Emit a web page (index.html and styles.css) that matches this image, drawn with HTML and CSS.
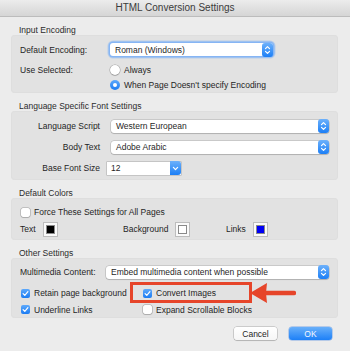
FILE: index.html
```html
<!DOCTYPE html>
<html lang="en">
<head>
  <meta charset="UTF-8" />
  <title>HTML Conversion Settings</title>
  <link rel="stylesheet" href="styles.css">
</head>
<body>
  <div class="titlebar">HTML Conversion Settings</div>

  <div class="content">
    <div class="section">
      <div class="section-title">Input Encoding</div>
      <div class="group group-encoding">
        <div class="row row-first">
          <span class="label">Default Encoding:</span>
          <div class="select select-focus select-encoding">
            <span class="select-text">Roman (Windows)</span>
            <span class="stepper"><svg viewBox="0 0 7 10" width="7" height="10"><path d="M1.5 3.6 L3.5 1.6 L5.5 3.6 M1.5 6.4 L3.5 8.4 L5.5 6.4" /></svg></span>
          </div>
        </div>
        <div class="row row-use">
          <span class="label">Use Selected:</span>
          <span class="radio"></span>
          <span class="option-text">Always</span>
        </div>
        <div class="row row-when">
          <span class="label"></span>
          <span class="radio on"></span>
          <span class="option-text">When Page Doesn't specify Encoding</span>
        </div>
      </div>
    </div>

    <div class="section">
      <div class="section-title">Language Specific Font Settings</div>
      <div class="group group-fonts">
        <div class="row">
          <span class="label">Language Script</span>
          <div class="select">
            <span class="select-text">Western European</span>
            <span class="stepper"><svg viewBox="0 0 7 10" width="7" height="10"><path d="M1.5 3.6 L3.5 1.6 L5.5 3.6 M1.5 6.4 L3.5 8.4 L5.5 6.4" /></svg></span>
          </div>
        </div>
        <div class="row">
          <span class="label">Body Text</span>
          <div class="select">
            <span class="select-text">Adobe Arabic</span>
            <span class="stepper"><svg viewBox="0 0 7 10" width="7" height="10"><path d="M1.5 3.6 L3.5 1.6 L5.5 3.6 M1.5 6.4 L3.5 8.4 L5.5 6.4" /></svg></span>
          </div>
        </div>
        <div class="row">
          <span class="label">Base Font Size</span>
          <div class="combo">
            <span class="combo-text">12</span>
            <span class="combo-btn"><svg viewBox="0 0 7 7" width="7" height="7"><path d="M1.4 2.4 L3.5 4.6 L5.6 2.4" /></svg></span>
          </div>
        </div>
      </div>
    </div>

    <div class="section">
      <div class="section-title">Default Colors</div>
      <div class="group group-colors">
        <div class="row">
          <span class="check"></span>
          <span class="option-text">Force These Settings for All Pages</span>
        </div>
        <div class="row row-swatches">
          <div class="color-item">
            <span>Text</span>
            <span class="swatch"><span class="swatch-fill fill-black"></span></span>
          </div>
          <div class="color-item">
            <span>Background</span>
            <span class="swatch"><span class="swatch-fill fill-white"></span></span>
          </div>
          <div class="color-item">
            <span>Links</span>
            <span class="swatch"><span class="swatch-fill fill-blue"></span></span>
          </div>
        </div>
      </div>
    </div>

    <div class="section">
      <div class="section-title">Other Settings</div>
      <div class="group group-other">
        <div class="row row-first">
          <span class="label">Multimedia Content:</span>
          <div class="select">
            <span class="select-text">Embed multimedia content when possible</span>
            <span class="stepper"><svg viewBox="0 0 7 10" width="7" height="10"><path d="M1.5 3.6 L3.5 1.6 L5.5 3.6 M1.5 6.4 L3.5 8.4 L5.5 6.4" /></svg></span>
          </div>
        </div>
        <div class="check-grid">
          <div class="check-item">
            <span class="check on"><svg viewBox="0 0 9 9" width="9" height="9"><path d="M2.1 4.6 L3.8 6.3 L6.9 2.6" /></svg></span>
            <span class="option-text">Retain page background</span>
          </div>
          <div class="check-item">
            <span class="check on"><svg viewBox="0 0 9 9" width="9" height="9"><path d="M2.1 4.6 L3.8 6.3 L6.9 2.6" /></svg></span>
            <span class="option-text">Convert Images</span>
          </div>
          <div class="check-item">
            <span class="check on"><svg viewBox="0 0 9 9" width="9" height="9"><path d="M2.1 4.6 L3.8 6.3 L6.9 2.6" /></svg></span>
            <span class="option-text">Underline Links</span>
          </div>
          <div class="check-item">
            <span class="check"></span>
            <span class="option-text">Expand Scrollable Blocks</span>
          </div>
        </div>

        <!-- annotation drawn over the dialog -->
        <div class="callout-box"></div>
        <svg class="callout-arrow" viewBox="0 0 46 20" width="46" height="20">
          <polygon points="0,10 17,0 16,10 17,20" />
          <line x1="15" y1="10" x2="44" y2="10" />
        </svg>
      </div>
    </div>

    <div class="actions">
      <button class="btn">Cancel</button>
      <button class="btn btn-primary">OK</button>
    </div>
  </div>
</body>
</html>
```

FILE: styles.css
```css
* {
  box-sizing: border-box;
}

body {
  margin: 0;
  width: 350px;
  height: 351px;
  overflow: hidden;
  background: #ececec;
  font-family: 'Liberation Sans', Arial, sans-serif;
  font-size: 8.5px;
  color: #1f1f1f;
}

.titlebar {
  height: 17px;
  line-height: 16px;
  text-align: center;
  font-size: 10px;
  color: #3b3b3b;
  background: linear-gradient(#ececec, #d5d5d5);
  border-bottom: 1px solid #bcbcbc;
}

.content {
  padding: 9px 12px 0 11px;
}

.section + .section {
  margin-top: 9px;
}

.section-title {
  height: 9px;
  line-height: 9px;
  padding-left: 8px;
  color: #2b2b2b;
}

.group {
  position: relative;
  background: #e2e2e2;
  border-radius: 4px;
  box-shadow: inset 0 0 0 1px #dedede;
  padding: 0 9px;
}

.row {
  display: flex;
  align-items: center;
}

/* Input Encoding */
.group-encoding {
  height: 58px;
  padding-top: 6px;
}

.group-encoding .row-first {
  height: 17px;
}

.group-encoding .row-use {
  height: 15px;
  margin-top: 4px;
}

.group-encoding .row-when {
  height: 16px;
}

.group-encoding .label {
  width: 90px;
}

.select {
  display: flex;
  align-items: center;
  height: 13px;
  background: #fff;
  border-radius: 3px;
  box-shadow: 0 0 0 0.5px rgba(0, 0, 0, 0.22), 0 1px 1px rgba(0, 0, 0, 0.12);
  flex: 1;
}

.select-focus {
  box-shadow: 0 0 0 1.5px #86b5f4, 0 0 0 2.5px rgba(134, 181, 244, 0.45);
}

.select-encoding {
  flex: none;
  width: 163px;
}

.select-text {
  flex: 1;
  padding-left: 5px;
  white-space: nowrap;
  overflow: hidden;
}

.stepper {
  display: flex;
  align-items: center;
  justify-content: center;
  width: 11px;
  height: 14px;
  border-radius: 3px;
  background: linear-gradient(#6db1fb, #1c7ff6);
}

.stepper path,
.combo-btn path,
.check path {
  fill: none;
  stroke: #fff;
  stroke-width: 1.2;
  stroke-linecap: round;
  stroke-linejoin: round;
}

.radio {
  width: 10px;
  height: 10px;
  border-radius: 50%;
  background: #fff;
  box-shadow: 0 0 0 0.5px rgba(0, 0, 0, 0.3), 0 1px 1px rgba(0, 0, 0, 0.12);
  display: flex;
  align-items: center;
  justify-content: center;
}

.radio.on {
  background: linear-gradient(#5ea9fb, #1b7cf3);
  box-shadow: none;
}

.radio.on::after {
  content: "";
  width: 4px;
  height: 4px;
  border-radius: 50%;
  background: #fff;
}

.option-text {
  margin-left: 4px;
  white-space: nowrap;
}

/* Language Specific Font Settings */
.group-fonts {
  height: 69px;
  padding-top: 4.5px;
}

.group-fonts .row {
  height: 21px;
}

.group-fonts .label {
  width: 80px;
  margin-right: 11px;
  text-align: right;
}

.combo {
  display: flex;
  align-items: center;
  width: 74px;
  height: 13px;
  margin-left: -4px;
  background: #fff;
  box-shadow: 0 0 0 0.5px rgba(0, 0, 0, 0.25);
}

.combo-text {
  flex: 1;
  padding-left: 4px;
}

.combo-btn {
  display: flex;
  align-items: center;
  justify-content: center;
  width: 11px;
  height: 14px;
  border-radius: 0 3px 3px 0;
  background: linear-gradient(#6db1fb, #1c7ff6);
}

/* Default Colors */
.group-colors {
  height: 42px;
  padding-top: 6.5px;
}

.group-colors .row {
  height: 15px;
}

.group-colors .row-swatches {
  margin-top: 2px;
}

.check {
  display: flex;
  align-items: center;
  justify-content: center;
  width: 9px;
  height: 9px;
  margin-left: 1px;
  border-radius: 2px;
  background: #fff;
  box-shadow: 0 0 0 0.5px rgba(0, 0, 0, 0.3), 0 1px 1px rgba(0, 0, 0, 0.1);
}

.check.on {
  background: linear-gradient(#5ea9fb, #1b7cf3);
  box-shadow: none;
}

.color-item {
  display: flex;
  align-items: center;
  gap: 7px;
  width: 109px;
}

.swatch {
  display: flex;
  align-items: center;
  justify-content: center;
  width: 15px;
  height: 15px;
  background: #fafafa;
  border: 1px solid #bdbdbd;
}

.swatch-fill {
  width: 9px;
  height: 9px;
  border: 1px solid #8a8a8a;
}

.fill-black {
  background: #000;
}

.fill-white {
  background: #fff;
}

.fill-blue {
  background: #0000f5;
}

/* Other Settings */
.group-other {
  height: 60px;
  padding-top: 6px;
}

.group-other .row-first {
  height: 16px;
}

.group-other .label {
  width: 86px;
}

.check-grid {
  display: grid;
  grid-template-columns: 122px 1fr;
  grid-template-rows: 16px 17px;
  margin-top: 5px;
}

.check-item {
  display: flex;
  align-items: center;
}

.callout-box {
  position: absolute;
  left: 119px;
  top: 24px;
  width: 122px;
  height: 21px;
  border: 3px solid #e6452a;
}

.callout-arrow {
  position: absolute;
  left: 239px;
  top: 25px;
}

.callout-arrow polygon {
  fill: #e6452a;
}

.callout-arrow line {
  stroke: #e6452a;
  stroke-width: 4.5;
  stroke-linecap: round;
}

.actions {
  display: flex;
  justify-content: flex-end;
  gap: 12px;
  margin-top: 9px;
  padding-right: 6px;
}

.btn {
  width: 43px;
  height: 13px;
  padding: 0;
  border: none;
  border-radius: 3px;
  background: linear-gradient(#ffffff, #f6f6f6);
  box-shadow: 0 0 0 0.5px rgba(0, 0, 0, 0.28), 0 1px 1px rgba(0, 0, 0, 0.12);
  font-family: inherit;
  font-size: 8.5px;
  color: #1f1f1f;
}

.btn-primary {
  background: linear-gradient(#69b0fa, #1d80f7);
  box-shadow: 0 0 0 0.5px rgba(20, 100, 220, 0.5);
  color: #f4f8ff;
}
```
